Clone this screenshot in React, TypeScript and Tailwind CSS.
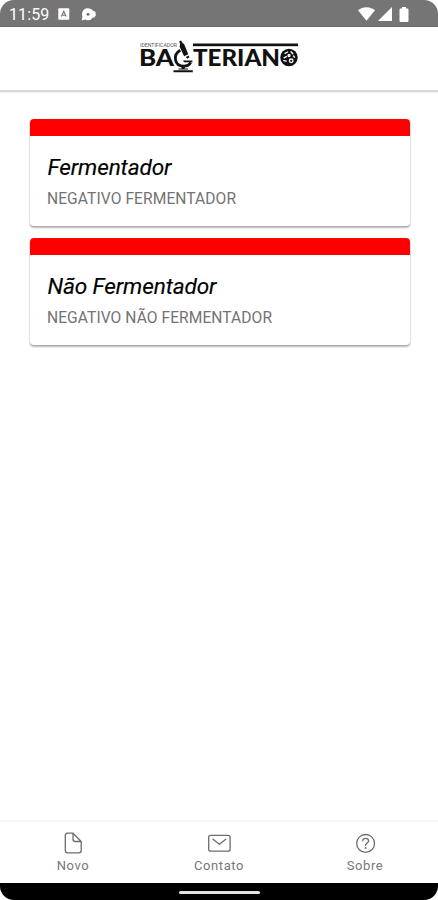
import type { ReactNode } from 'react';

const results = [
  { title: 'Fermentador', subtitle: 'NEGATIVO FERMENTADOR', titleLength: 124, subtitleLength: 189 },
  { title: 'Não Fermentador', subtitle: 'NEGATIVO NÃO FERMENTADOR', titleLength: 169, subtitleLength: 225 },
];

const StatusBar = () => (
  <div className="flex h-[27px] items-center justify-between border-b border-[#686868] bg-[#757575] pl-[9px] pr-[29px] text-white">
    <div className="flex items-center pt-[2px]">
      <span className="w-[40px] whitespace-nowrap pt-[2px] text-[16px] leading-4 tracking-[0.1px]">11:59</span>
      <svg className="ml-[9px]" width="12" height="12" viewBox="0 0 12 12">
        <rect x="0.3" y="0.3" width="11" height="11.4" rx="1" fill="#fff" />
        <path d="M3.4 8.6 5.8 3.4l2.4 5.2M4.2 7.2h3.2" fill="none" stroke="#757575" strokeWidth="1.1" />
      </svg>
      <svg className="ml-[11px]" width="16" height="13" viewBox="0 0 16 13">
        <path d="M6.6.3C9 .3 11 1.3 12.2 3h1.5v1.2h1v4h-1v1.2h-1.8a6.3 6.3 0 0 1-7.7 2.2L.8 12.6l.6-4C.2 4.3 2.6.3 6.6.3Z" fill="#fff" />
        <circle cx="7" cy="6.2" r="1.5" fill="#757575" />
      </svg>
    </div>
    <div className="flex items-center gap-[3px] pt-[2px]">
      <svg width="17" height="14" viewBox="0 0 17 14">
        <path d="M8.5 13.7 0 3.3C5-.7 12-.7 17 3.3Z" fill="#fff" />
      </svg>
      <svg width="14" height="14" viewBox="0 0 14 14">
        <path d="M14 0v14H0Z" fill="#fff" />
      </svg>
      <svg className="ml-1" width="10" height="15" viewBox="0 0 10 15">
        <path d="M3 0h4v1.5h1.5q1 0 1 1V14q0 1-1 1h-7q-1 0-1-1V2.5q0-1 1-1H3Z" fill="#fff" />
      </svg>
    </div>
  </div>
);

const Logo = () => (
  <svg width="160" height="36" viewBox="0 0 160 36" fill="#111">
    <text x="1" y="6.8" fontSize="4.6" textLength="37" lengthAdjust="spacingAndGlyphs" fill="#555">
      IDENTIFICADOR
    </text>
    <g className="font-['Lato',sans-serif] font-black" fontSize="23.6">
      <text x="0" y="26" textLength="35" lengthAdjust="spacingAndGlyphs">BA</text>
      <text x="54" y="26" textLength="87" lengthAdjust="spacingAndGlyphs">TERIAN</text>
    </g>
    <rect x="54" y="3.5" width="105" height="2.7" />
    {/* microscope standing in for the C */}
    <path d="m40.3 1.2 1.8-.8 1.6 2.9 1.4.6 4.2 10.3-4.2 2-4.6-9.8.6-2Z" />
    <path d="m46.8 17 3-1.4.6 1.6-2 1.6Z" />
    <path d="M41.3 10.3c-8 4.6-5.9 15.8 3.4 15.8 3.5 0 5.8-1.4 7-3.8" fill="none" stroke="#111" strokeWidth="2.8" />
    <path d="M44 20.6h9.4v1.7H45ZM42.5 27h3.2v1.6h-3.2ZM39.5 28.4h9.5v1.2h-9.5ZM34.5 30.2h19.3v2.1H34.5Z" />
    {/* petri dish standing in for the O */}
    <circle cx="150" cy="17.5" r="8.7" />
    <g fill="none" stroke="#fff" strokeWidth="1.3" strokeLinecap="round">
      <path d="m146 13.4 2.6-1.4M152 11.8l1.8 2M145 17.8l2.4-1.2M144.8 20.6l2.4.6" />
      <circle cx="152.2" cy="20.8" r="1.8" />
      <circle cx="150" cy="15.5" r="1" />
      <path d="m154.5 16 1 1.2" />
    </g>
  </svg>
);

const ResultCard = ({ title, subtitle, titleLength, subtitleLength }: (typeof results)[number]) => (
  <article className="h-[107px] overflow-hidden rounded-[4px] bg-white shadow-[0_2px_2px_rgba(0,0,0,0.24),0_1px_2px_rgba(0,0,0,0.16)]">
    <div className="h-[17px] bg-[#fe0000]" />
    <div className="px-[17px] pt-[17px]">
      <svg className="block overflow-visible" width="300" height="28">
        <text x="0.5" y="22" textLength={titleLength} className="text-[22.6px] italic" fill="#000" stroke="#000" strokeWidth="0.15">
          {title}
        </text>
      </svg>
      <svg className="block overflow-visible" width="300" height="24">
        <text x="0" y="23" textLength={subtitleLength} className="text-[15.6px]" fill="#737373">
          {subtitle}
        </text>
      </svg>
    </div>
  </article>
);

const TabIcon = ({ children }: { children: ReactNode }) => (
  <svg width="24" height="24" viewBox="0 0 24 24" fill="none" stroke="#6c6c6c" strokeWidth="1.3" strokeLinecap="round" strokeLinejoin="round">
    {children}
  </svg>
);

const tabs = [
  {
    label: 'Novo',
    icon: (
      <TabIcon>
        <path d="M12 2.2H6.7q-2.4 0-2.4 2.4v14.8q0 2.4 2.4 2.4h11.1q2.4 0 2.4-2.4V10.5L12 2.2v6.1q0 2.2 2.2 2.2h6" />
      </TabIcon>
    ),
  },
  {
    label: 'Contato',
    icon: (
      <TabIcon>
        <rect x="1.7" y="4.4" width="21.4" height="15.8" rx="2" />
        <path d="m6 8.2 6.4 5 6.4-5" />
      </TabIcon>
    ),
  },
  {
    label: 'Sobre',
    icon: (
      <TabIcon>
        <circle cx="12.6" cy="12.4" r="8.9" />
        <path d="M9.8 9.8c0-1.7 1.2-2.4 2.8-2.4 1.7 0 3 1 3 2.5 0 2.1-3 2.2-3 4.4" />
        <circle cx="12.6" cy="17" r="0.4" />
      </TabIcon>
    ),
  },
];

export default function App() {
  return (
    <div className="bg-white font-['Roboto',sans-serif]">
      <div className="flex h-[900px] w-[438px] flex-col overflow-hidden rounded-[14px] bg-white">
        <StatusBar />
        <header className="flex h-[65px] shrink-0 justify-center border-b-2 border-[#d9d9d9] pt-[13px] shadow-[0_1px_1px_rgba(0,0,0,0.06)]">
          <Logo />
        </header>
        <main className="flex flex-1 flex-col gap-3 pl-[30px] pr-[28px] pt-[27px]">
          {results.map((result) => (
            <ResultCard key={result.title} {...result} />
          ))}
        </main>
        <nav className="grid h-[63px] grid-cols-3 border-t-2 border-[#f5f5f5]">
          {tabs.map(({ label, icon }) => (
            <div key={label} className="flex flex-col items-center pt-[9px] text-[13px] leading-[21px] tracking-[0.6px] text-[#777]">
              {icon}
              <span>{label}</span>
            </div>
          ))}
        </nav>
        <div className="flex h-[17px] justify-center bg-black pt-[7.5px]">
          <div className="h-[3px] w-[81px] rounded-full bg-[#e2e2e2]" />
        </div>
      </div>
    </div>
  );
}
